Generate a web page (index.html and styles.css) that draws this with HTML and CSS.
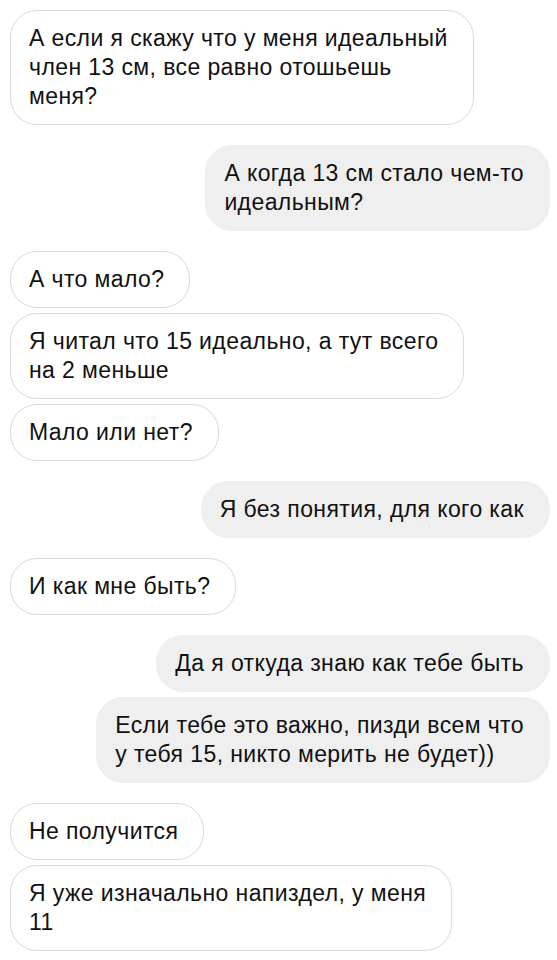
FILE: index.html
```html
<!DOCTYPE html>
<html>
<head>
<meta name="viewport" content="width=device-width, initial-scale=1">
<link rel="stylesheet" href="styles.css">
</head>
<body>

<div class="chat">

  <div class="group them">
    <div class="msg">А если я скажу что у меня идеальный<br>член 13 см, все равно отошьешь<br>меня?</div>
  </div>

  <div class="group me">
    <div class="msg">А когда 13 см стало чем-то<br>идеальным?</div>
  </div>

  <div class="group them">
    <div class="msg">А что мало?</div>
    <div class="msg">Я читал что 15 идеально, а тут всего<br>на 2 меньше</div>
    <div class="msg">Мало или нет?</div>
  </div>

  <div class="group me">
    <div class="msg">Я без понятия, для кого как</div>
  </div>

  <div class="group them">
    <div class="msg">И как мне быть?</div>
  </div>

  <div class="group me">
    <div class="msg">Да я откуда знаю как тебе быть</div>
    <div class="msg">Если тебе это важно, пизди всем что<br>у тебя 15, никто мерить не будет))</div>
  </div>

  <div class="group them">
    <div class="msg">Не получится</div>
    <div class="msg">Я уже изначально напиздел, у меня<br>11</div>
  </div>

</div>

</body>
</html>
```

FILE: styles.css
```css
body {
    margin: 0;
    background: #fff;
    font-family: "Liberation Sans", Arial, sans-serif;
    color: #111;
}

.chat {
    display: flex;
    flex-direction: column;
    gap: 20px;
    padding: 10px 7px 10px 10px;
}

.group {
    display: flex;
    flex-direction: column;
    gap: 5px;
}

.group.them {
    align-items: flex-start;
}

.group.me {
    align-items: flex-end;
}

.msg {
    font-size: 23px;
    letter-spacing: 0.4px;
    line-height: 29px;
    padding: 13px 25px 13px 18px;
    border: 1px solid transparent;
    border-radius: 27px;
    white-space: nowrap;
}

.them .msg {
    background: #fff;
    border-color: #d9d9d9;
}

.me .msg {
    background: #efefef;
    border-color: #efefef;
}
```
